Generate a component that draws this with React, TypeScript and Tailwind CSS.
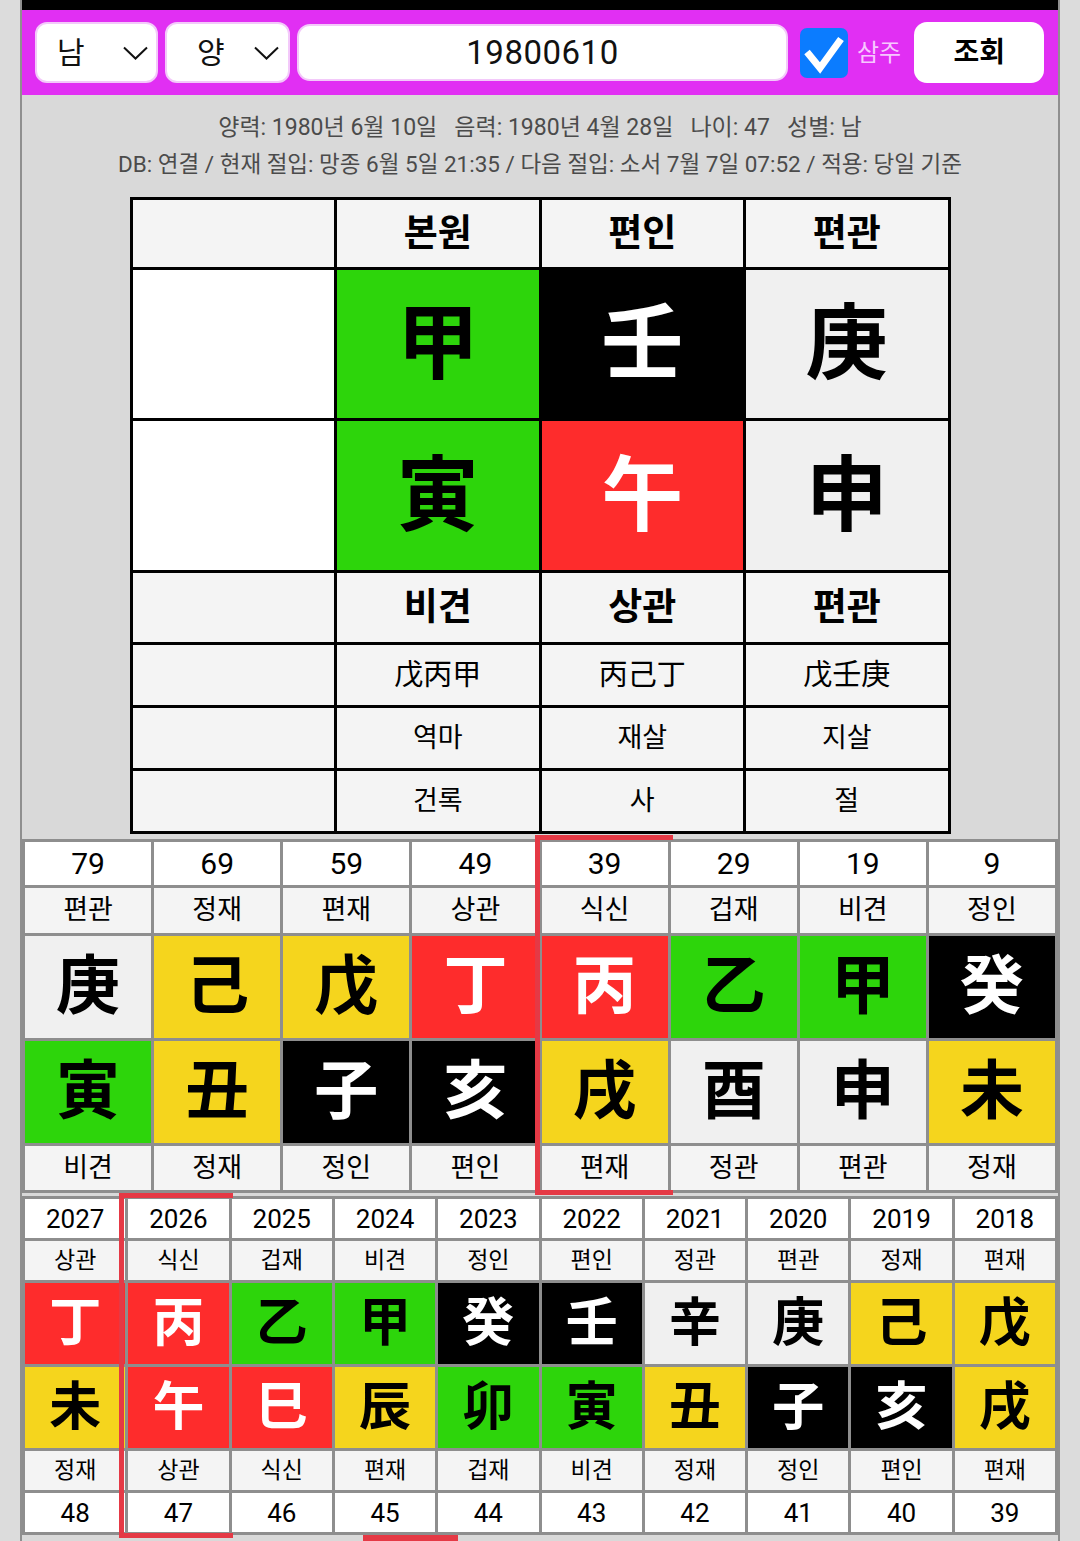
import type { ReactNode } from 'react'

type Tone = 'G' | 'Y' | 'R' | 'K' | 'W'

const tone: Record<Tone, string> = {
  G: 'bg-[#2dd50b] text-black',
  Y: 'bg-[#f5d51d] text-black',
  R: 'bg-[#fe2c2c] text-white',
  K: 'bg-black text-white',
  W: 'bg-[#f0f0f0] text-black',
}

interface Pillar {
  head: string
  top: string
  stem: string
  sc: Tone
  branch: string
  bc: Tone
  bottom: string
  foot?: string
}

const daeun: Pillar[] = [
  { head: '79', top: '편관', stem: '庚', sc: 'W', branch: '寅', bc: 'G', bottom: '비견' },
  { head: '69', top: '정재', stem: '己', sc: 'Y', branch: '丑', bc: 'Y', bottom: '정재' },
  { head: '59', top: '편재', stem: '戊', sc: 'Y', branch: '子', bc: 'K', bottom: '정인' },
  { head: '49', top: '상관', stem: '丁', sc: 'R', branch: '亥', bc: 'K', bottom: '편인' },
  { head: '39', top: '식신', stem: '丙', sc: 'R', branch: '戌', bc: 'Y', bottom: '편재' },
  { head: '29', top: '겁재', stem: '乙', sc: 'G', branch: '酉', bc: 'W', bottom: '정관' },
  { head: '19', top: '비견', stem: '甲', sc: 'G', branch: '申', bc: 'W', bottom: '편관' },
  { head: '9', top: '정인', stem: '癸', sc: 'K', branch: '未', bc: 'Y', bottom: '정재' },
]

const sewoon: Pillar[] = [
  { head: '2027', top: '상관', stem: '丁', sc: 'R', branch: '未', bc: 'Y', bottom: '정재', foot: '48' },
  { head: '2026', top: '식신', stem: '丙', sc: 'R', branch: '午', bc: 'R', bottom: '상관', foot: '47' },
  { head: '2025', top: '겁재', stem: '乙', sc: 'G', branch: '巳', bc: 'R', bottom: '식신', foot: '46' },
  { head: '2024', top: '비견', stem: '甲', sc: 'G', branch: '辰', bc: 'Y', bottom: '편재', foot: '45' },
  { head: '2023', top: '정인', stem: '癸', sc: 'K', branch: '卯', bc: 'G', bottom: '겁재', foot: '44' },
  { head: '2022', top: '편인', stem: '壬', sc: 'K', branch: '寅', bc: 'G', bottom: '비견', foot: '43' },
  { head: '2021', top: '정관', stem: '辛', sc: 'W', branch: '丑', bc: 'Y', bottom: '정재', foot: '42' },
  { head: '2020', top: '편관', stem: '庚', sc: 'W', branch: '子', bc: 'K', bottom: '정인', foot: '41' },
  { head: '2019', top: '정재', stem: '己', sc: 'Y', branch: '亥', bc: 'K', bottom: '편인', foot: '40' },
  { head: '2018', top: '편재', stem: '戊', sc: 'Y', branch: '戌', bc: 'Y', bottom: '편재', foot: '39' },
]

function Cell({ className, children }: { className: string; children?: ReactNode }) {
  return <div className={`flex items-center justify-center leading-none ${className}`}>{children}</div>
}

function Chevron() {
  return (
    <svg width="25" height="14" viewBox="0 0 25 14" fill="none">
      <polyline points="1,1.5 12.5,12.5 24,1.5" stroke="#111" strokeWidth="2" />
    </svg>
  )
}

export default function App() {
  return (
    <div className="min-h-screen bg-[#dcdcdc] px-[20px] font-['Roboto','Noto_Sans_CJK_KR',sans-serif]">
      <div className="border-x-2 border-[#8f8f8f] bg-[#d9d9d9]">
        <div className="h-[10px] bg-black" />

        {/* 입력 바 */}
        <div className="flex h-[85px] items-center bg-[#e12ff3] pl-[13px]">
          <div className="flex h-[61px] w-[123px] items-center justify-between rounded-[12px] border-2 border-[#f3c9fa] bg-white pl-[20px] pr-[8px] text-[30px] text-[#111]">
            <span>남</span>
            <Chevron />
          </div>
          <div className="ml-[7px] flex h-[61px] w-[125px] items-center justify-between rounded-[12px] border-2 border-[#f3c9fa] bg-white pl-[30px] pr-[9px] text-[30px] text-[#111]">
            <span>양</span>
            <Chevron />
          </div>
          <div className="ml-[7px] flex h-[57px] w-[491px] items-center justify-center rounded-[13px] border-2 border-[#f3c9fa] bg-white text-[33px] tracking-[0.5px] text-[#111]">
            19800610
          </div>
          <div className="ml-[12px] flex h-[50px] w-[48px] items-center justify-center rounded-[7px] bg-[#0b7cff]">
            <svg width="48" height="50" viewBox="0 0 48 50" fill="none">
              <polyline points="7,24 20,40 41,11" stroke="white" strokeWidth="7" />
            </svg>
          </div>
          <span className="ml-[9px] text-[24px] text-[#f7c8ff]">삼주</span>
          <div className="ml-[13px] flex h-[61px] w-[130px] items-center justify-center rounded-[13px] bg-white text-[28px] font-bold text-black">
            조회
          </div>
        </div>

        {/* 정보 */}
        <div className="pb-[15px] pt-[15px] text-center leading-[36px] text-[#4b4b4b]">
          <div className="whitespace-pre text-[23px]">양력: 1980년 6월 10일   음력: 1980년 4월 28일   나이: 47   성별: 남</div>
          <div className="whitespace-pre text-[22.5px]">DB: 연결 / 현재 절입: 망종 6월 5일 21:35 / 다음 절입: 소서 7월 7일 07:52 / 적용: 당일 기준</div>
        </div>

        {/* 원국 */}
        <div className="mx-auto grid w-[821px] grid-cols-4 grid-rows-[67px_148px_149px_69px_60px_60px_60px] gap-[3px] bg-black p-[3px] text-black">
          <Cell className="bg-[#f4f4f4]" />
          <Cell className="bg-[#f4f4f4] text-[37px] font-bold">본원</Cell>
          <Cell className="bg-[#f4f4f4] text-[37px] font-bold">편인</Cell>
          <Cell className="bg-[#f4f4f4] text-[37px] font-bold">편관</Cell>

          <Cell className="bg-white" />
          <Cell className={`${tone.G} text-[82px] font-bold`}>甲</Cell>
          <Cell className={`${tone.K} text-[82px] font-bold`}>壬</Cell>
          <Cell className={`${tone.W} text-[82px] font-bold`}>庚</Cell>

          <Cell className="bg-white" />
          <Cell className={`${tone.G} text-[82px] font-bold`}>寅</Cell>
          <Cell className={`${tone.R} text-[82px] font-bold`}>午</Cell>
          <Cell className={`${tone.W} text-[82px] font-bold`}>申</Cell>

          <Cell className="bg-[#f4f4f4]" />
          <Cell className="bg-[#f4f4f4] text-[37px] font-bold">비견</Cell>
          <Cell className="bg-[#f4f4f4] text-[37px] font-bold">상관</Cell>
          <Cell className="bg-[#f4f4f4] text-[37px] font-bold">편관</Cell>

          <Cell className="bg-[#f4f4f4]" />
          <Cell className="bg-[#f4f4f4] text-[29px]">戊丙甲</Cell>
          <Cell className="bg-[#f4f4f4] text-[29px]">丙己丁</Cell>
          <Cell className="bg-[#f4f4f4] text-[29px]">戊壬庚</Cell>

          <Cell className="bg-[#f4f4f4]" />
          <Cell className="bg-[#f4f4f4] text-[27px]">역마</Cell>
          <Cell className="bg-[#f4f4f4] text-[27px]">재살</Cell>
          <Cell className="bg-[#f4f4f4] text-[27px]">지살</Cell>

          <Cell className="bg-[#f4f4f4]" />
          <Cell className="bg-[#f4f4f4] text-[27px]">건록</Cell>
          <Cell className="bg-[#f4f4f4] text-[27px]">사</Cell>
          <Cell className="bg-[#f4f4f4] text-[27px]">절</Cell>
        </div>

        {/* 대운 */}
        <div className="relative mt-[5px]">
          <div className="grid grid-flow-col grid-cols-8 grid-rows-[43px_45px_102px_102px_44px] gap-[3px] bg-[#8e8e8e] p-[3px] text-black">
            {daeun.map((p) => [
              <Cell key={p.head + 'a'} className="bg-white text-[30px]">{p.head}</Cell>,
              <Cell key={p.head + 'b'} className="bg-[#f4f4f4] text-[27px]">{p.top}</Cell>,
              <Cell key={p.head + 'c'} className={`${tone[p.sc]} text-[64px] font-bold`}>{p.stem}</Cell>,
              <Cell key={p.head + 'd'} className={`${tone[p.bc]} text-[64px] font-bold`}>{p.branch}</Cell>,
              <Cell key={p.head + 'e'} className="bg-[#f4f4f4] text-[27px]">{p.bottom}</Cell>,
            ])}
          </div>
          <div className="pointer-events-none absolute left-[513px] top-[-4px] h-[360px] w-[138px] border-b-[5px] border-l-[5px] border-t-[5px] border-[#e53945]" />
        </div>

        {/* 세운 */}
        <div className="relative mt-[3px]">
          <div className="grid grid-flow-col grid-cols-10 grid-rows-[39px_39px_81px_81px_39px_39px] gap-[3px] bg-[#8e8e8e] p-[3px] text-black">
            {sewoon.map((p) => [
              <Cell key={p.head + 'a'} className="bg-white text-[26px]">{p.head}</Cell>,
              <Cell key={p.head + 'b'} className="bg-[#f4f4f4] text-[23px]">{p.top}</Cell>,
              <Cell key={p.head + 'c'} className={`${tone[p.sc]} text-[52px] font-bold`}>{p.stem}</Cell>,
              <Cell key={p.head + 'd'} className={`${tone[p.bc]} text-[52px] font-bold`}>{p.branch}</Cell>,
              <Cell key={p.head + 'e'} className="bg-[#f4f4f4] text-[23px]">{p.bottom}</Cell>,
              <Cell key={p.head + 'f'} className="bg-white text-[26px]">{p.foot}</Cell>,
            ])}
          </div>
          <div className="pointer-events-none absolute left-[97px] top-[-3px] h-[345px] w-[114px] border-b-[5px] border-l-[5px] border-t-[5px] border-[#e53945]" />
        </div>

        <div className="h-[20px]">
          <div className="ml-[341px] h-[6px] w-[95px] bg-[#e53945]" />
        </div>
      </div>
    </div>
  )
}
